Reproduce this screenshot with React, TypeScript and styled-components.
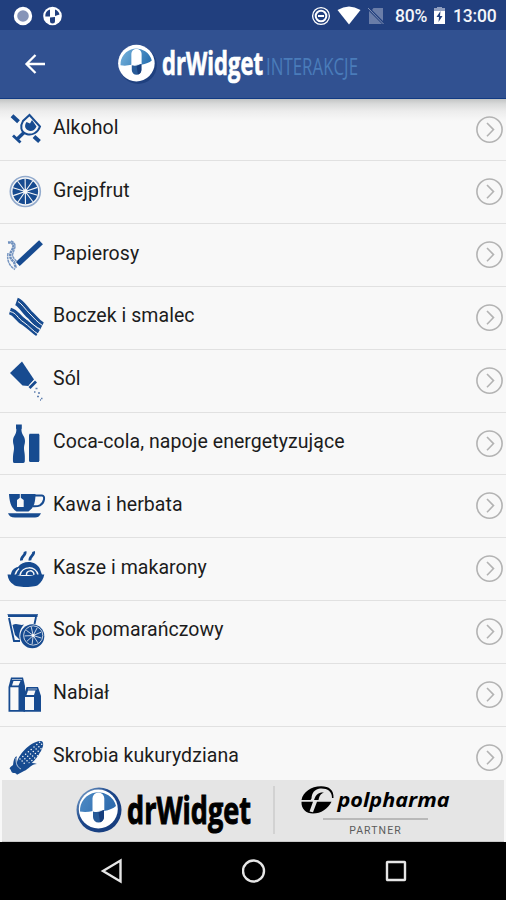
import React from "react";
import styled, { createGlobalStyle } from "styled-components";

const BLUE = "#174b90";
const PAPER = "#f8f8f8";

const GlobalStyle = createGlobalStyle`
  body { margin: 0; background: #000; }
  svg { display: block; flex: none; }
`;

const Screen = styled.div`
  width: 506px;
  height: 900px;
  display: flex;
  flex-direction: column;
  overflow: hidden;
  background: ${PAPER};
  font-family: Roboto, "Liberation Sans", sans-serif;
`;

const StatusBar = styled.div`
  flex: none;
  height: 30px;
  box-sizing: border-box;
  padding: 1px 9px 0 13px;
  display: flex;
  align-items: center;
  background: #213f7e;
  color: #f3f5fa;
`;

const StatusGroup = styled.div<{ $gap: number }>`
  display: flex;
  align-items: center;
  gap: ${(p) => p.$gap}px;
`;

const Spacer = styled.div`
  flex: 1;
`;

const StatusText = styled.span<{ $width: number }>`
  width: ${(p) => p.$width}px;
  font-size: 17.5px;
  line-height: 28px;
  font-weight: 500;
  letter-spacing: -0.15px;
  white-space: nowrap;
`;

const AppBar = styled.header`
  flex: none;
  height: 68.7px;
  box-sizing: border-box;
  padding-left: 24px;
  display: flex;
  align-items: center;
  background: #315191;
  border-bottom: 1.5px solid #113a83;
`;

const BackButton = styled.button`
  margin: 0 71px 0 0;
  padding: 1px 0 0;
  border: 0;
  background: none;
`;

const Brand = styled.div`
  display: flex;
  align-items: center;
`;

const List = styled.ul`
  flex: none;
  height: 681.3px;
  margin: 0;
  padding: 0;
  list-style: none;
  overflow: hidden;
  background: linear-gradient(#c2c4c4 0, #d9dada 5px, #ececec 12px, ${PAPER} 22px);
`;

const Row = styled.li`
  height: 62.8px;
  box-sizing: border-box;
  display: flex;
  align-items: flex-start;
  border-bottom: 1.6px solid #e1e1e1;
`;

const Label = styled.span`
  flex: 1;
  padding: 17.4px 0 0 3px;
  font-size: 19.5px;
  line-height: 24px;
  letter-spacing: 0.06px;
  color: #1c1c1c;
  white-space: nowrap;
`;

const Sponsors = styled.footer`
  flex: none;
  height: 62px;
  box-sizing: border-box;
  margin: 0 2px;
  padding-left: 74px;
  display: flex;
  align-items: center;
  background: #e5e5e5;
  border-bottom: 1px solid #c8c8c8;
`;

const Divider = styled.div`
  width: 1.5px;
  height: 48px;
  margin: 0 26px 0 19px;
  background: #d2d2d2;
`;

const Partner = styled.div`
  width: 150px;
  height: 62px;
  display: flex;
  flex-direction: column;
  align-items: center;
`;

const PartnerRule = styled.div`
  width: 105px;
  height: 2px;
  margin-top: 1px;
  background: #b9b9b9;
`;

const PartnerText = styled.span`
  margin-top: 4px;
  font-size: 10.5px;
  line-height: 13px;
  letter-spacing: 1.1px;
  color: #5c5c5c;
`;

const NavBar = styled.nav`
  flex: 1;
  padding: 0 98px 0 100px;
  display: flex;
  align-items: center;
  justify-content: space-between;
  background: #000;
`;

const NavIcon = styled.svg`
  width: 24px;
  height: 26px;
  fill: none;
  stroke: #e6e6e6;
  stroke-width: 2.4;
`;

const FoodSvg = styled.svg`
  width: 50px;
  height: 62px;
  fill: ${BLUE};
  stroke: none;
`;

const line = { fill: "none", stroke: BLUE } as const;
const pale = { fill: "none", stroke: PAPER } as const;

function Slice({ cx, cy, r, spokes }: { cx: number; cy: number; r: number; spokes: number }) {
  return (
    <g>
      <circle cx={cx} cy={cy} r={r} />
      {Array.from({ length: spokes }, (_, i) => {
        const a = (i * 2 * Math.PI) / spokes + 0.3;
        return (
          <path key={i} {...pale} strokeWidth={r > 12 ? 1.1 : 0.8}
            d={`M${cx} ${cy}L${cx + r * Math.cos(a)} ${cy + r * Math.sin(a)}`} />
        );
      })}
      <circle cx={cx} cy={cy} r={r * 0.17} fill={PAPER} />
    </g>
  );
}

const kernels: [number, number][] = [];
for (let i = 0; i < 8; i++) for (let j = 0; j < 4; j++) kernels.push([20 + i * 2.8 + j * 2.1, 32 - i * 2.4 + j * 2.1]);

const icons: Record<string, React.ReactNode> = {
  alcohol: (
    <g>
      <path d="M12 16.800L18.500 22.800M34 37.500L39.500 42.500" {...line} strokeWidth="4" />
      <path d="M29.500 16L40 27.500C38 33.500 32 37 26.500 35C20.500 33 20 27 23 22Z" {...line} strokeWidth="2" />
      <path d="M26.500 23L30 24.500L32 21L36.500 27.500C34.500 32 30.500 33 27.500 31C24.500 29 24.500 26 26.500 23Z" />
      <path d="M24 33.500L17 40.300" {...line} strokeWidth="3.400" />
      <path d="M13 36.500L20.500 43.500" {...line} strokeWidth="2.800" />
    </g>
  ),
  grapefruit: (
    <g>
      <circle cx="25.300" cy="30.500" r="15" fill="none" stroke="#93abcd" strokeWidth="1.600" />
      <Slice cx={25.3} cy={30.5} r={12.8} spokes={10} />
    </g>
  ),
  cigarette: (
    <g>
      <path d="M17.800 40L41 18.300" {...line} strokeWidth="5.600" />
      <path d="M8 18.500C15 18 14 23 11.500 27C9 31 10 35 14 38L16 44" fill="none" stroke="#6e8fbd" strokeWidth="2.400" strokeDasharray="2.600 .5" />
      <path d="M11 17C18 20 14 25 13 29C11 33 15 35 17 38M8 29C7 35 8 41 15 45.500" fill="none" stroke="#7897c2" strokeWidth="1.500" strokeDasharray="3 .5" />
    </g>
  ),
  bacon: (
    <g>
      <path d="M10 24C17 26 17 31 24 35C29 38 33 43 38 46" {...line} strokeWidth="7" />
      <path d="M16.500 14.500C21 16 24 22 29 27C34 31 36 36 42 39" {...line} strokeWidth="8" />
      <path d="M10 24.500C17 26 17 31 24 35.500C29 39 33 44 38 47M18 14.500C22 17 25 22 30 27C34 31 37 35 42.500 38.500" {...pale} strokeWidth="1" />
      <path d="M12 20C20 22 23 30 30 35C34 38 36 40 40 42" {...pale} strokeWidth="1" />
    </g>
  ),
  salt: (
    <g>
      <path d="M10 23L22 11.500L34 29.500L28.500 36L22.500 35.500Z" />
      <path d="M29.500 38L36 31.500" {...line} strokeWidth="2.800" />
      <path d="M29 35.500L33.800 30.500" {...pale} strokeWidth=".9" />
      <path d="M35.500 38.500h2M34 42h1.500M38 43h2M37 46.500h2M41 48.500h1.500M40 50h1" fill="none" stroke="#5f7fae" strokeWidth="1.400" />
    </g>
  ),
  cola: (
    <g>
      <path d="M16 11.500h5.800v4l-.4 1C21.500 22 25 23 25 28c0 3-1 4-1 7 0 4 1.200 5 .8 13.500Q24.500 50 23 50h-8.500Q13 50 13 48.500C12.800 40 14 39 14 35c0-3-1-4-1-7 0-5 3.400-6 3.400-11.500l-.4-1Z" />
      <path d="M29.500 20.700h9.500l.4 1.500v25l-.6 1.800h-9.200l-.6-1.800v-25Z" />
    </g>
  ),
  coffee: (
    <g>
      <path d="M9 19H35.500C35.500 28 33.500 33 28.500 36.500H16.500C11 33 9.500 27 9 19Z" />
      <path d="M35 20.500H42C45.500 20.500 44.500 28 40 30.300C37.500 31.600 35 31.300 33 31.300" {...line} strokeWidth="2" />
      <path d="M8 38.200H41C39.500 41.500 37.500 42.500 35 42.500H15C11 42.500 9 41 8 38.200Z" />
      <path d="M20.300 19V24" {...pale} strokeWidth="1" />
      <path d="M20.300 22.500L23.700 25V32H17V25Z" fill={PAPER} />
    </g>
  ),
  pasta: (
    <g>
      <path d="M25 13.500C26.500 17 20.500 18.500 21.500 22.500M33.500 13.500C35 17 29 18.500 30 22.500" {...line} strokeWidth="2.800" />
      <path d="M11 37C11 33 14 29.500 18 29C23 22 36 22 40 31L42 37Z" />
      <path d="M15 37C16 34 17 32 19 30.500M20 37C22 28 36 27 38 37M26.500 37C26 32 34 31 34 37" {...pale} strokeWidth="1.500" />
      <path d="M7.500 36.500H16C20 38.500 31 38.500 35 36.500H44.300C43.500 41 41 44.500 38.500 46.500C37.500 49.800 14.500 49.800 13.500 46.500C10 44.500 8 41 7.500 36.500Z" />
    </g>
  ),
  juice: (
    <g>
      <path d="M8 15H37.500M9 17L14 40H20M36 16L34.500 23" {...line} strokeWidth="1.900" />
      <path d="M7.500 13.700H38" {...line} strokeWidth="1" />
      <path d="M12.500 24C17 21.500 20 25 24 23.500C20 28 18.500 33 20 39L15 34Z" />
      <circle cx="32.300" cy="35.200" r="12" />
      <circle cx="33.200" cy="34.500" r="9.600" {...pale} strokeWidth=".8" />
      <Slice cx={33.2} cy={34.5} r={8.7} spokes={9} />
    </g>
  ),
  dairy: (
    <g>
      <path d="M11 13.500H23L25 22V47.800H8.500V23Z" />
      <path d="M10.300 23.300H18.500V46H10.300ZM12 21.500L13.500 17H20.500L18.500 21.500Z" fill={PAPER} />
      <path d="M26.500 23H38L41 32V47.800H23.500V32Z" />
      <path d="M25 33H34V46H25ZM26.500 31L28 26.500H35.500L34 31Z" fill={PAPER} />
      <path d="M12 15.500H22M28 25H37" {...pale} strokeWidth=".6" />
    </g>
  ),
  corn: (
    <g>
      <path d="M17 39C15 31 29 15 40 14C43 13.500 43.500 16 43 19C40 29 30 40 21 42Z" />
      {kernels.map(([x, y], i) => <circle key={i} cx={x} cy={y} r=".75" fill={PAPER} />)}
      <path d="M16.500 29C17 34 16 36 19 38C24 38 31 34 37 37C31 37 29 42 24 44L17 47.800C16 46 15 46 13.500 46C11 46 11.500 43 9.500 41.500C10 40 12 39 13 38C13.500 34 14 31 16.500 29Z" />
      <path d="M16 31C16 37 17 40 21 42" {...pale} strokeWidth=".7" />
    </g>
  ),
};

const items = [
  ["alcohol", "Alkohol"],
  ["grapefruit", "Grejpfrut"],
  ["cigarette", "Papierosy"],
  ["bacon", "Boczek i smalec"],
  ["salt", "Sól"],
  ["cola", "Coca-cola, napoje energetyzujące"],
  ["coffee", "Kawa i herbata"],
  ["pasta", "Kasze i makarony"],
  ["juice", "Sok pomarańczowy"],
  ["dairy", "Nabiał"],
  ["corn", "Skrobia kukurydziana"],
];

function Chevron() {
  return (
    <svg width="32" height="60" fill="none" stroke="#b3b3b3" strokeWidth="1.600">
      <circle cx="15.500" cy="30.600" r="12.600" />
      <path d="M13 24L19.500 30.600L13 37.200" />
    </svg>
  );
}

function Emblem({ id, size, dark }: { id: string; size: number; dark?: boolean }) {
  return (
    <svg width={size} height={size} viewBox="0 0 46 46">
      <defs>
        <linearGradient id={id} x1="0" y1="0" x2="1" y2=".3">
          <stop offset="0" stopColor={dark ? "#4f8cc6" : "#78b4dc"} />
          <stop offset="1" stopColor={dark ? "#2f6cae" : "#2f76b4"} />
        </linearGradient>
        <linearGradient id={`${id}-rim`} x1="0" y1="0" x2="1" y2="1">
          <stop offset="0" stopColor="#8db4d9" />
          <stop offset=".4" stopColor="#1d478a" />
          <stop offset="1" stopColor="#153a7a" />
        </linearGradient>
      </defs>
      {dark ? <circle cx="23" cy="23" r="22.500" fill={`url(#${id}-rim)`} /> : <circle cx="24.300" cy="24.500" r="21.500" fill="#1f407f" />}
      <circle cx="22.300" cy="22" r={dark ? 19.5 : 21} fill="#fff" />
      <path d="M4 24.500A18.300 18.300 0 0 1 40 19Q36 22.500 28 24H17Q10 25.500 4 24.500Z" fill={`url(#${id})`} />
      <path d="M16.500 24.500V11.300A5.900 5.900 0 0 1 28.300 11.300V23.500Z" fill="#fff" />
      <path d="M17 24.500Q22 26 28 23V30A5.500 5.500 0 0 1 17 30Z" fill="#285b98" />
      <path d="M22.500 25.300L28 23V30A5.500 5.500 0 0 1 24 35.200Z" fill="#173e7d" />
    </svg>
  );
}

const wordmark = {
  fontFamily: '"Open Sans", "Noto Sans", sans-serif',
  fontWeight: 700,
  lengthAdjust: "spacingAndGlyphs",
} as const;

export default function App() {
  return (
    <Screen>
      <GlobalStyle />
      <StatusBar>
        <StatusGroup $gap={10}>
          <svg width="20" height="20"><circle cx="10" cy="10" r="7.500" fill="#8694b8" stroke="#fff" strokeWidth="3.400" /></svg>
          <svg width="19" height="20">
            <circle cx="9.500" cy="10" r="9.300" fill="#fff" />
            <path d="M2.300 10.500A7 7 0 0 1 7 3.500V10.500ZM12 3.500A7 7 0 0 1 16.500 8.500L12 10ZM7 11.500L12 11V15A2.500 2.500 0 0 1 7 15Z" fill="#213f7e" />
          </svg>
        </StatusGroup>
        <Spacer />
        <StatusGroup $gap={7}>
          <svg width="28" height="20" viewBox="-4.500 0 28 20" fill="none" stroke="#fff">
            <circle cx="9.500" cy="10" r="8.400" strokeWidth="1.300" />
            <circle cx="9.500" cy="10" r="5.300" strokeWidth="2" />
            <path d="M6.500 10H12.500" strokeWidth="2" />
          </svg>
          <svg width="23" height="20" viewBox="4.500 0 23 20" overflow="visible"><path d="M0 4Q11.500-3 23 4L11.500 18.500Z" fill="#fff" /></svg>
          <svg width="16" height="20" viewBox="4 0 16 20" overflow="visible">
            <path d="M5.500 2H15V15L4 4ZM1 5L14 18H1Z" fill="#6a7da8" />
            <path d="M0 2L15.500 18" stroke="#8291b5" strokeWidth="1" />
          </svg>
          <StatusGroup $gap={4}>
            <StatusText $width={34}>80%</StatusText>
            <svg width="13" height="20">
              <path d="M1 2.500H4V1H9V2.500H12V18H1Z" fill="#fff" />
              <path d="M1 2.500H4V1H9V2.500H12V5H1Z" fill="#8f9ec0" />
              <path d="M7.500 5L3.500 11H6L5.500 16L9.500 10H7Z" fill="#213f7e" />
            </svg>
          </StatusGroup>
          <StatusText $width={44}>13:00</StatusText>
        </StatusGroup>
      </StatusBar>
      <AppBar>
        <BackButton aria-label="Wstecz">
          <svg width="22" height="22" fill="none" stroke="#fff" strokeWidth="2.300">
            <path d="M21 11H3M11.500 2L2.500 11L11.500 20" />
          </svg>
        </BackButton>
        <Brand>
          <Emblem id="top" size={40} />
          <svg width="210" height="60" overflow="visible">
            <text {...wordmark} x="5" y="40.500" fontSize="32" fill="#fff" stroke="#fff" strokeWidth=".7" textLength="101">drWidget</text>
            <text x="109" y="41" fontFamily='"Open Sans", sans-serif' fontSize="24.500" fill="#4a7cba" textLength="92" lengthAdjust="spacingAndGlyphs">INTERAKCJE</text>
          </svg>
        </Brand>
      </AppBar>
      <List>
        {items.map(([icon, label]) => (
          <Row key={icon}>
            <FoodSvg viewBox="0 0 50 62">{icons[icon]}</FoodSvg>
            <Label>{label}</Label>
            <Chevron />
          </Row>
        ))}
      </List>
      <Sponsors>
        <Emblem id="bottom" size={46} dark />
        <svg width="132" height="60" overflow="visible">
          <text {...wordmark} x="5" y="43.500" fontSize="38" fill="#000" stroke="#000" strokeWidth="1" textLength="124">drWidget</text>
        </svg>
        <Divider />
        <Partner>
          <svg width="150" height="38" overflow="visible">
            <path d="M.5 21C2 13 10 7.500 20 7.300C28 7.200 33 11 32.500 19H31C31 12 26 9 19 9.500C13 10.500 11 14 10.500 19.500L9.500 21Z" fill="#000" />
            <path d="M.5 22.800H12L8.500 32.500L12 33.300L16 22.800H30.500C27 30 20 34.500 12 34.500C5 34.500 0 30 .5 22.800Z" fill="#000" />
            <path d="M13 21H17.500C18.500 16.500 19.500 15 23 13.500C18 13 15 15 13 21Z" fill="#000" />
            <text x="36.500" y="28" fontFamily='"Open Sans", sans-serif' fontWeight="700" fontStyle="italic" fontSize="19" textLength="112" lengthAdjust="spacingAndGlyphs">polpharma</text>
          </svg>
          <PartnerRule />
          <PartnerText>PARTNER</PartnerText>
        </Partner>
      </Sponsors>
      <NavBar>
        <NavIcon><path d="M20.500 2.500V23.500L3 13Z" /></NavIcon>
        <NavIcon><circle cx="11.500" cy="13" r="10.500" /></NavIcon>
        <NavIcon><rect x="3" y="4" width="18" height="18" rx=".5" /></NavIcon>
      </NavBar>
    </Screen>
  );
}
